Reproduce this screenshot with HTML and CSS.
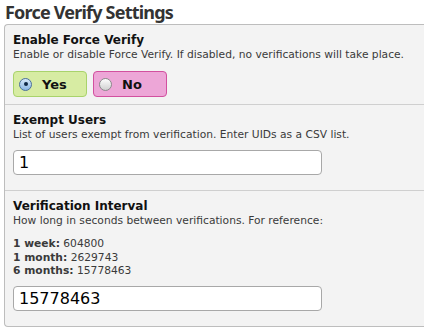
FILE: index.html
```html
<!DOCTYPE html>
<html>
<head>
  <meta charset="UTF-8">
  <title>Force Verify Settings</title>
  <link rel="stylesheet" href="styles.css">
</head>
<body>
  <h1 class="page-title">Force Verify Settings</h1>
  <div class="panel">
    <div class="setting">
      <div class="setting-label">Enable Force Verify</div>
      <div class="setting-desc">Enable or disable Force Verify. If disabled, no verifications will take place.</div>
      <div class="choices">
        <label class="choice choice-yes"><span class="radio checked"></span>Yes</label>
        <label class="choice choice-no"><span class="radio"></span>No</label>
      </div>
    </div>
    <div class="setting">
      <div class="setting-label">Exempt Users</div>
      <div class="setting-desc">List of users exempt from verification. Enter UIDs as a CSV list.</div>
      <input class="text-input" type="text" value="1">
    </div>
    <div class="setting">
      <div class="setting-label">Verification Interval</div>
      <div class="setting-desc">How long in seconds between verifications. For reference:</div>
      <div class="setting-desc ref-list">
        <b>1 week:</b> 604800<br>
        <b>1 month:</b> 2629743<br>
        <b>6 months:</b> 15778463
      </div>
      <input class="text-input" type="text" value="15778463">
    </div>
  </div>
</body>
</html>
```

FILE: styles.css
```css
/* Force Verify settings */
body {
  margin: 0;
  padding: 0;
  background-color: #fff;
  font-family: "DejaVu Sans", Verdana, sans-serif;
  color: #333;
}

.page-title {
  margin: 0;
  padding: 0 0 0 5px;
  font-family: "Noto Sans", "DejaVu Sans", sans-serif;
  font-size: 18px;
  line-height: 24px;
  letter-spacing: -0.8px;
  color: #333;
}

.panel {
  margin-left: 4px;
  background-color: #f3f3f3;
  border: 1px solid #bdbdbd;
  border-right: none;
  border-radius: 4px 0 0 4px;
}

.setting {
  padding: 8px 9px 15px 8px;
  border-top: 1px solid #cfcfcf;
}

.setting:first-child {
  border-top: none;
  padding-bottom: 7px;
}

.setting-label {
  font-size: 12px;
  font-weight: bold;
  line-height: 15px;
  color: #111;
}

.setting-desc {
  font-size: 10.7px;
  line-height: 14px;
  color: #3a3a3a;
}

.ref-list {
  margin-top: 9px;
  line-height: 13.5px;
}

.choices {
  display: flex;
  gap: 6px;
  margin-top: 9px;
}

.choice {
  display: flex;
  align-items: center;
  gap: 10px;
  box-sizing: border-box;
  width: 74px;
  height: 26px;
  padding-left: 5px;
  border-radius: 4px;
  font-size: 13px;
  font-weight: bold;
  color: #111;
}

.choice-yes {
  background-color: #d7eca3;
  border: 1px solid #a9d36c;
}

.choice-no {
  background-color: #eda6d7;
  border: 1px solid #d2509f;
}

.radio {
  position: relative;
  box-sizing: border-box;
  width: 13px;
  height: 13px;
  border-radius: 50%;
  border: 1px solid #8a8a8a;
  background: linear-gradient(#fdfdfd, #d0d0d0);
}

.radio.checked {
  border-color: #4a6f9c;
  background: linear-gradient(#d6e8f8, #8ab7e4);
}

.radio.checked::after {
  content: "";
  position: absolute;
  left: 3.5px;
  top: 3.5px;
  width: 4px;
  height: 4px;
  border-radius: 50%;
  background-color: #0e2745;
}

.text-input {
  display: block;
  box-sizing: border-box;
  width: 309px;
  height: 25px;
  margin-top: 8px;
  padding: 0 5px;
  border: 1px solid #a8a8a8;
  border-radius: 4px;
  background-color: #fff;
  font-family: "DejaVu Sans", Verdana, sans-serif;
  font-size: 16px;
  color: #000;
}
```
